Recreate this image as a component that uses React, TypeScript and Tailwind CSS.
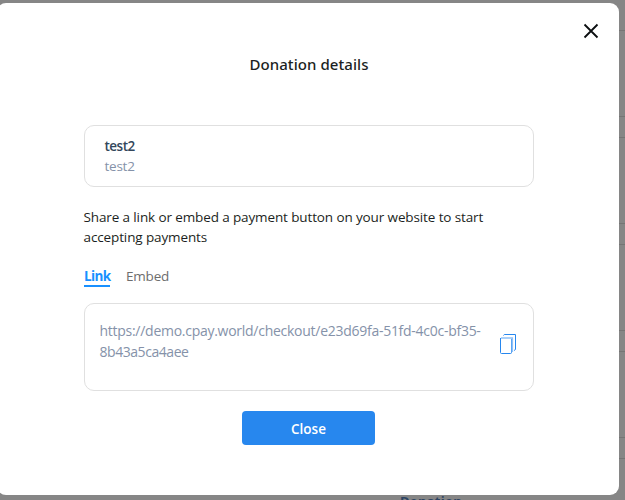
import React from "react";

const rowHeights = ["h-[31px]", "h-[86px]", "h-[21px]", "h-[86px]", "h-[21px]", "h-[86px]", "h-[21px]", "h-[86px]", "h-[21px]"];

function Backdrop() {
  return (
    <div className="absolute inset-0 bg-[#868686]">
      <div className="flex flex-col items-end">
        {rowHeights.map((height, i) => (
          <div key={i} className={`${height} box-border w-full border-b border-[#757575]`} />
        ))}
      </div>
      <div className="absolute top-[492px] left-[400px] text-[13px] leading-[18px] font-bold tracking-[0.2px] text-[#2d4463]">
        Donation
      </div>
    </div>
  );
}

function CopyIcon() {
  return (
    <svg width="18" height="21" viewBox="0 0 18 21" fill="none">
      <path d="M4.5 1.5l.8-1h11.2v15l-1.5 1" stroke="#2787ee" />
      <path d="M1.5 4v14.5q0 1 1 1h9q1 0 1-1V5" stroke="#2787ee" />
      <path d="M2 4h11.3v14" stroke="#8fc1f8" strokeWidth="1.6" />
    </svg>
  );
}

export default function App() {
  return (
    <div className="relative h-[500px] w-[625px] overflow-hidden font-['Open_Sans','Noto_Sans',sans-serif]">
      <Backdrop />
      <div className="relative mt-[3px] -ml-[3px] flex h-[492px] w-[622px] flex-col rounded-[9px] bg-white pt-[20px] pl-[87px]">
        <button className="mr-[20px] flex h-4 w-4 items-center justify-center self-end">
          <svg width="16" height="16" viewBox="0 0 16 16" fill="none" stroke="#0b0e10" strokeWidth="1.8">
            <path d="M1.5 1.5l13 13M14.5 1.5l-13 13" />
          </svg>
        </button>
        <h1 className="mt-[13px] w-[450px] text-center font-['Noto_Sans','Open_Sans',sans-serif] text-[15px] leading-[24px] font-medium tracking-[0.06px] text-[#1c1f22]">
          Donation details
        </h1>
        <section className="mt-[49px] flex h-[62px] w-[450px] flex-col justify-center rounded-[10px] border border-[#e0e0e0] pl-[19.5px] text-[13.5px] leading-[20px]">
          <span className="font-semibold tracking-[-0.5px] text-[#33475b]">test2</span>
          <span className="tracking-[-0.25px] text-[#8592a9]">test2</span>
        </section>
        <p className="mt-[20px] -ml-[0.5px] text-[13.5px] leading-[20px] tracking-[-0.12px] whitespace-nowrap text-[#1c1f22]">
          Share a link or embed a payment button on your website to start
          <br />
          accepting payments
        </p>
        <nav className="mt-[19px] flex h-[21px] gap-[16px] text-[13.5px] leading-[20px]">
          <span className="w-[26px] border-b-2 border-[#1890ff] font-bold tracking-[-0.6px] text-[#1890ff]">Link</span>
          <span className="tracking-[-0.2px] text-[#6d6d6d]">Embed</span>
        </nav>
        <section className="mt-[16px] flex h-[88px] w-[450px] justify-between rounded-[10px] border border-[#e0e0e0] pt-[16px] pr-[16px] pl-[14.5px]">
          <p className="text-[14px] leading-[21px] whitespace-nowrap text-[#8592a9]">
            <span className="tracking-[-0.27px]">https://demo.cpay.world/checkout/e23d69fa-51fd-4c0c-bf35-</span>
            <br />
            <span className="tracking-[-0.45px]">8b43a5ca4aee</span>
          </p>
          <button className="mt-[14px] h-[21px]">
            <CopyIcon />
          </button>
        </section>
        <button className="mt-[20px] ml-[158px] h-[34px] w-[133px] rounded-[4px] bg-[#2787ee] pt-[2px] text-[13.5px] font-semibold text-white">
          Close
        </button>
      </div>
    </div>
  );
}
